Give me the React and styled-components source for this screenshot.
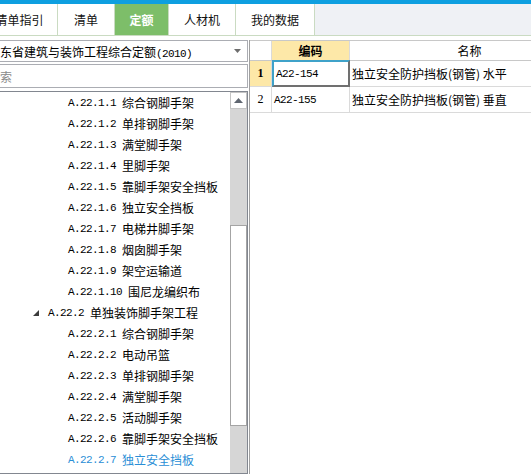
import React from "react"
import styled, { createGlobalStyle } from "styled-components"

const GlobalStyle = createGlobalStyle`
  * { box-sizing: border-box; }
  body {
    margin: 0;
    overflow: hidden;
    background: #fff;
    font-family: "Noto Sans CJK SC", "Liberation Sans", sans-serif;
    font-size: 12px;
    color: #000;
  }
`

const Page = styled.div`
  width: 531px;
  height: 474px;
  overflow: hidden;
  display: flex;
  flex-direction: column;
  background: #fff;
`

const TopStripe = styled.div`
  height: 4px;
  background: #0e9fe0;
`

const TabBar = styled.div`
  height: 32px;
  margin-left: -18px;
  display: flex;
  background: #eff1f5;
  border-bottom: 1px solid #cadbc2;
`

const Tab = styled.div`
  width: ${ ({ w }) => w }px;
  display: flex;
  align-items: center;
  justify-content: center;
  background: ${ ({ active }) => active ? "#7dbe69" : "#fff" };
  color: ${ ({ active }) => active ? "#fff" : "#111" };
  font-weight: ${ ({ active }) => active ? "bold" : "normal" };
  border-right: 1px solid #cadbc2;
  line-height: 1;
`

const Body = styled.div`
  flex: 1;
  min-height: 0;
  display: flex;
  padding-top: 4px;
`

const LeftPanel = styled.div`
  width: 262px;
  margin-left: -14px;
  display: flex;
  flex-direction: column;
  gap: 2px;
`

const Dropdown = styled.div`
  height: 22px;
  display: flex;
  align-items: center;
  padding-left: 1px;
  border: 1px solid #abadb3;
  background: #fff;
  white-space: nowrap;
`

const DropText = styled.div`
  flex: 1;
  overflow: hidden;
`

// half-width latin, about 6px a character like the old bitmap font
const Mono = styled.span`
  font-family: "Liberation Mono", monospace;
  font-size: 11px;
  letter-spacing: -0.6px;
`

const DropArrow = styled.svg`
  margin-right: 6px;
  flex: none;
`

const Search = styled.div`
  height: 24px;
  display: flex;
  align-items: center;
  padding-left: 1px;
  border: 1px solid #abadb3;
  color: #8a8a8a;
  background: #fff;
  margin-bottom: 1px;
`

const Tree = styled.div`
  flex: 1;
  min-height: 0;
  display: flex;
  border: 1px solid #828790;
  background: #fff;
`

const TreeList = styled.div`
  flex: 1;
  overflow: hidden;
`

const TreeRow = styled.div`
  height: 21px;
  display: flex;
  align-items: center;
  padding-left: ${ ({ group }) => group ? 46 : 81 }px;
  white-space: nowrap;
  color: ${ ({ selected }) => selected ? "#2a8ed6" : "#000" };
`

const Expander = styled.svg`
  margin-right: 9px;
  flex: none;
`

const Code = styled(Mono)`
  margin-right: 6px;
`

const ScrollBar = styled.div`
  width: 17px;
  flex: none;
  display: flex;
  flex-direction: column;
  background: #d6d6d6;
`

const ScrollButton = styled.div`
  height: 17px;
  display: flex;
  align-items: center;
  justify-content: center;
  background: #fff;
  border: 1px solid #c4c4c4;
`

const ScrollThumb = styled.div`
  height: 201px;
  margin-top: 116px;
  background: #fff;
  border: 1px solid #a4a4a4;
`

const RightPanel = styled.div`
  flex: 1;
  margin-left: 1px;
  border-left: 1px solid #a0a0a0;
  overflow: hidden;
`

const GridRow = styled.div`
  display: flex;
  height: ${ ({ header }) => header ? 21 : 26 }px;
  border-top: ${ ({ header }) => header ? "1px solid #c8c8c8" : "none" };
  border-bottom: 1px solid ${ ({ header }) => header ? "#c8c8c8" : "#dadada" };
`

const Cell = styled.div`
  flex: none;
  width: ${ ({ w }) => w }px;
  display: flex;
  align-items: center;
  justify-content: ${ ({ center }) => center ? "center" : "flex-start" };
  padding-left: ${ ({ center }) => center ? 0 : 2 }px;
  background: ${ ({ hl }) => hl ? "#fde8a8" : "#fff" };
  border-right: 1px solid #dadada;
  font-weight: ${ ({ bold }) => bold ? "bold" : "normal" };
  white-space: nowrap;
  ${ ({ focused }) => focused && `
    border: 2px solid;
    border-color: #3fa2c9 #707070 #707070 #3fa2c9;
    margin-top: -1px;
    height: 27px;
  ` }
`

const RowNum = styled.span`
  font-family: "Liberation Serif", serif;
  font-size: 12px;
`

const tabs = [
  { label: "清单指引", w: 76 },
  { label: "清单", w: 57 },
  { label: "定额", w: 54, active: true },
  { label: "人材机", w: 67 },
  { label: "我的数据", w: 79 }
]

const treeItems = [
  { code: "A.22.1.1", name: "综合钢脚手架" },
  { code: "A.22.1.2", name: "单排钢脚手架" },
  { code: "A.22.1.3", name: "满堂脚手架" },
  { code: "A.22.1.4", name: "里脚手架" },
  { code: "A.22.1.5", name: "靠脚手架安全挡板" },
  { code: "A.22.1.6", name: "独立安全挡板" },
  { code: "A.22.1.7", name: "电梯井脚手架" },
  { code: "A.22.1.8", name: "烟囱脚手架" },
  { code: "A.22.1.9", name: "架空运输道" },
  { code: "A.22.1.10", name: "围尼龙编织布" },
  { code: "A.22.2", name: "单独装饰脚手架工程", group: true },
  { code: "A.22.2.1", name: "综合钢脚手架" },
  { code: "A.22.2.2", name: "电动吊篮" },
  { code: "A.22.2.3", name: "单排钢脚手架" },
  { code: "A.22.2.4", name: "满堂脚手架" },
  { code: "A.22.2.5", name: "活动脚手架" },
  { code: "A.22.2.6", name: "靠脚手架安全挡板" },
  { code: "A.22.2.7", name: "独立安全挡板", selected: true }
]

const rows = [
  { num: "1", code: "A22-154", name: "独立安全防护挡板(钢管) 水平", current: true },
  { num: "2", code: "A22-155", name: "独立安全防护挡板(钢管) 垂直" }
]

const App = () => (
  <Page>
    <GlobalStyle />
    <TopStripe />
    <TabBar>
      {
        tabs.map(tab => (
          <Tab key={ tab.label } w={ tab.w } active={ tab.active }>
            { tab.label }
          </Tab>
        ))
      }
    </TabBar>
    <Body>
      <LeftPanel>
        <Dropdown>
          <DropText>
            广东省建筑与装饰工程综合定额<Mono>(2010)</Mono>
          </DropText>
          <DropArrow width="7" height="4" viewBox="0 0 7 4">
            <polygon points="0,0 7,0 3.5,4" fill="#6d6d6d" />
          </DropArrow>
        </Dropdown>
        <Search>搜索</Search>
        <Tree>
          <TreeList>
            {
              treeItems.map(item => (
                <TreeRow key={ item.code } group={ item.group } selected={ item.selected }>
                  {
                    item.group &&
                    <Expander width="6" height="6" viewBox="0 0 6 6">
                      <polygon points="6,0 6,6 0,6" fill="#3c3c3c" />
                    </Expander>
                  }
                  <Code>{ item.code }</Code>
                  { item.name }
                </TreeRow>
              ))
            }
          </TreeList>
          <ScrollBar>
            <ScrollButton>
              <svg width="9" height="5" viewBox="0 0 9 5">
                <polygon points="0,5 9,5 4.5,0" fill="#5f6670" />
              </svg>
            </ScrollButton>
            <ScrollThumb />
          </ScrollBar>
        </Tree>
      </LeftPanel>
      <RightPanel>
        <GridRow header>
          <Cell w={ 22 } />
          <Cell w={ 78 } center hl bold>编码</Cell>
          <Cell w={ 240 } center>名称</Cell>
        </GridRow>
        {
          rows.map(row => (
            <GridRow key={ row.num }>
              <Cell w={ 22 } center hl={ row.current } bold={ row.current }>
                <RowNum>{ row.num }</RowNum>
              </Cell>
              <Cell w={ 78 } focused={ row.current }>
                <Mono>{ row.code }</Mono>
              </Cell>
              <Cell w={ 240 }>{ row.name }</Cell>
            </GridRow>
          ))
        }
      </RightPanel>
    </Body>
  </Page>
)

export default App
